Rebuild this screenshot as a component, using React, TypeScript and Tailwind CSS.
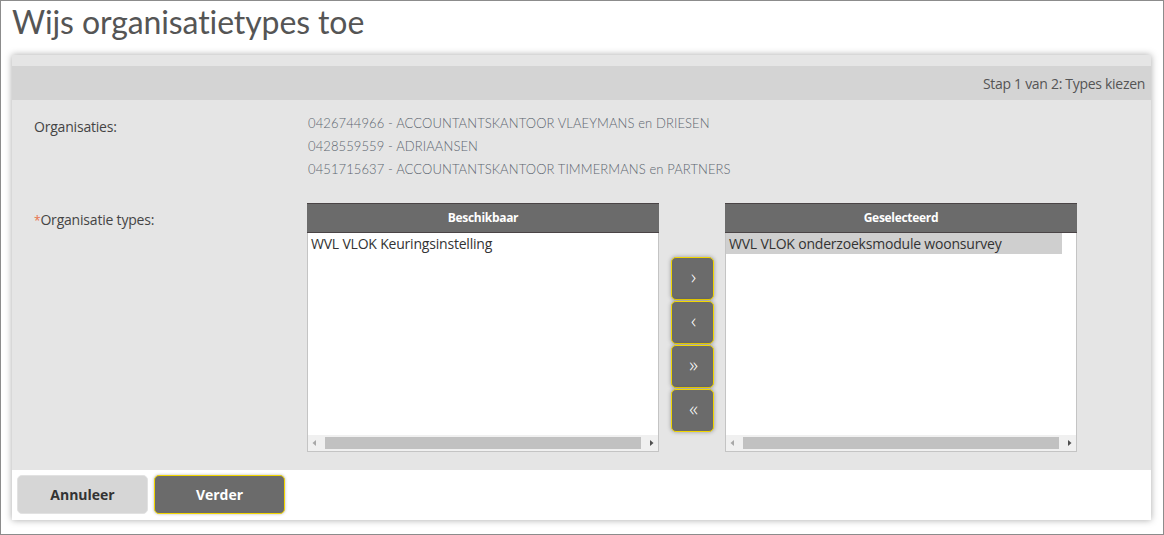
import React from 'react'

const orgs = [
  '0426744966 - ACCOUNTANTSKANTOOR VLAEYMANS en DRIESEN',
  '0428559559 - ADRIAANSEN',
  '0451715637 - ACCOUNTANTSKANTOOR TIMMERMANS en PARTNERS',
]

function ScrollBar() {
  return (
    <div className="flex items-center h-[16px] bg-[#f0f0f0] px-[2px]">
      <svg width="10" height="10" viewBox="0 0 10 10" className="shrink-0">
        <path d="M6 2 L2.5 5 L6 8 Z" fill="#a8a8a8" />
      </svg>
      <div className="mx-[5px] h-[12px] flex-1 bg-[#c1c1c1]" />
      <svg width="10" height="10" viewBox="0 0 10 10" className="shrink-0">
        <path d="M4 2 L7.5 5 L4 8 Z" fill="#505050" />
      </svg>
    </div>
  )
}

function ListBox({ title, items, selected }: { title: string; items: string[]; selected?: boolean }) {
  return (
    <div className="w-[352px] h-[249px] flex flex-col">
      <div className="h-[30px] bg-[#6b6b6b] border-t border-b border-[#4a4446] flex items-center justify-center text-white text-[12px] font-bold font-['Open_Sans',sans-serif] tracking-[-0.3px]">
        {title}
      </div>
      <div className="flex-1 flex flex-col bg-white border border-t-0 border-[#c4c4c4]">
        <div className="flex-1 pr-[14px]">
          {items.map((it) => (
            <div
              key={it}
              className={`h-[21px] leading-[22px] pl-[3px] text-[14px] text-[#333] font-['Open_Sans',sans-serif] tracking-[-0.2px] ${selected ? 'bg-[#cfcfcf]' : ''}`}
            >
              {it}
            </div>
          ))}
        </div>
        <ScrollBar />
      </div>
    </div>
  )
}

function MoveButton({ glyph }: { glyph: string }) {
  return (
    <button className="w-[43px] h-[43px] rounded-[5px] bg-[#6b6b6b] border border-[#f2d600] shadow-[0_0_4px_rgba(0,0,0,0.35)] text-white text-[20px] font-light leading-none flex items-center justify-center pl-[3px] pb-[3px] font-['Open_Sans',sans-serif]">
      {glyph}
    </button>
  )
}

export default function App() {
  return (
    <div className="w-[1164px] h-[535px] border border-[#8c8c8c] bg-white font-['Open_Sans',sans-serif] overflow-hidden">
      <h1 className="h-[54px] pl-[11px] pt-[1px] text-[32px] leading-[40px] text-[#555] font-['Lato',sans-serif] tracking-[-0.1px]">
        Wijs organisatietypes toe
      </h1>
      <div className="ml-[11px] mr-[12px] shadow-[0_0_7px_rgba(0,0,0,0.35)]">
        <div className="h-[11px] bg-[#e5e5e5]" />
        <div className="h-[34px] bg-[#d4d4d4] flex items-center justify-end pr-[6px] text-[14px] text-[#555] tracking-[-0.3px]">
          Stap 1 van 2: Types kiezen
        </div>
        <div className="h-[370px] bg-[#e5e5e5] pl-[22px] pt-[12px]">
          <div className="flex">
            <div className="w-[274px] pt-[3px] text-[14px] leading-[23px] text-[#444] tracking-[-0.2px]">Organisaties:</div>
            <div className="text-[13px] leading-[23px] text-[#5d6670] font-['Lato',sans-serif] font-light tracking-[0.1px]">
              {orgs.map((o) => (
                <div key={o}>{o}</div>
              ))}
            </div>
          </div>
          <div className="flex mt-[22px]">
            <div className="w-[273px] pt-[5px] text-[14px] leading-[23px] text-[#444] tracking-[-0.2px]">
              <span className="text-[#e8724a] text-[12px]">*</span>Organisatie types:
            </div>
            <ListBox title="Beschikbaar" items={['WVL VLOK Keuringsinstelling']} />
            <div className="w-[66px] flex flex-col items-center pt-[54px] gap-[1px]">
              <MoveButton glyph="›" />
              <MoveButton glyph="‹" />
              <MoveButton glyph="»" />
              <MoveButton glyph="«" />
            </div>
            <ListBox title="Geselecteerd" items={['WVL VLOK onderzoeksmodule woonsurvey']} selected />
          </div>
        </div>
        <div className="h-[50px] bg-white flex items-start gap-[6px] pl-[5px] pt-[5px]">
          <button className="w-[131px] h-[39px] rounded-[5px] bg-[#d6d6d6] border border-[#e2e2e2] text-[14px] font-bold text-[#333]">
            Annuleer
          </button>
          <button className="w-[131px] h-[39px] rounded-[5px] bg-[#6b6b6b] border border-[#f2d600] shadow-[0_0_3px_rgba(0,0,0,0.3)] text-[14px] font-bold text-white">
            Verder
          </button>
        </div>
      </div>
    </div>
  )
}
